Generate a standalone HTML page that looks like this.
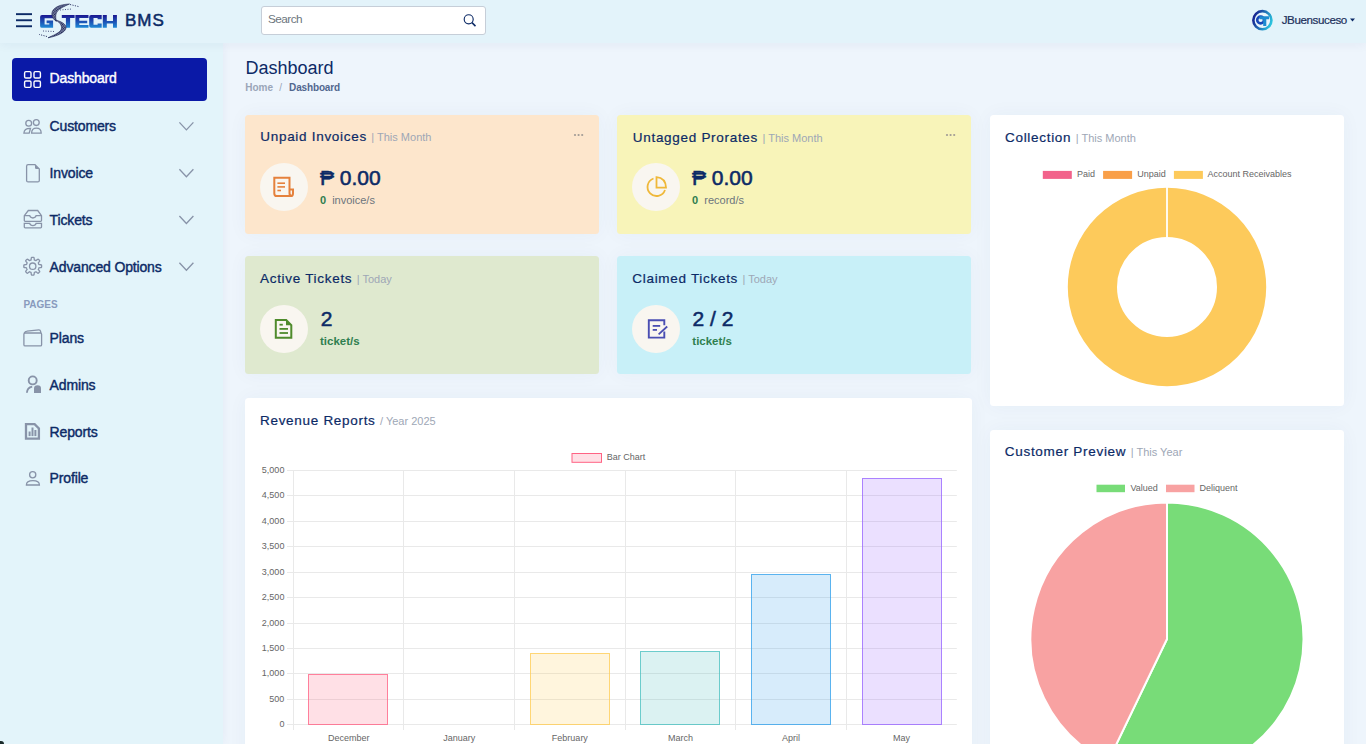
<!DOCTYPE html>
<html><head><meta charset="utf-8">
<style>
*{box-sizing:border-box;margin:0;padding:0}
html,body{width:1366px;height:744px;overflow:hidden}
body{font-family:"Liberation Sans",sans-serif;background:#eef5fc;position:relative;color:#012970}
.a{position:absolute}
.t{position:absolute;line-height:1;white-space:nowrap}
.card{position:absolute;border-radius:3.5px;box-shadow:0 0 20px rgba(20,60,120,0.045)}
.circ{position:absolute;width:48px;height:48px;border-radius:50%;background:#f9f6f0}
svg{position:absolute;overflow:visible}
</style></head><body>

<div class="card" style="left:245px;top:115px;width:354px;height:119px;background:#fde6cc"></div>
<div class="card" style="left:617px;top:115px;width:354px;height:119px;background:#f8f4b9"></div>
<div class="card" style="left:245px;top:256px;width:354px;height:118px;background:#dfe9cf"></div>
<div class="card" style="left:617px;top:256px;width:354px;height:118px;background:#c8f0f8"></div>
<div class="card" style="left:990px;top:115px;width:354px;height:291px;background:#ffffff"></div>
<div class="card" style="left:245px;top:398px;width:727px;height:380px;background:#ffffff"></div>
<div class="card" style="left:990px;top:430px;width:354px;height:360px;background:#ffffff"></div>
<div class="a" style="left:0;top:0;width:1366px;height:43px;background:#e3f3fa;box-shadow:0 2px 10px rgba(1,41,112,0.05);z-index:2"></div>
<div class="a" style="left:0;top:43px;width:223px;height:701px;background:#e3f4fa;box-shadow:0 0 10px rgba(1,41,112,0.05);z-index:1"></div>
<svg style="left:0;top:0;z-index:3" width="1366" height="43"><rect x="16" y="13.2" width="16" height="1.9" fill="#0c2a66"/><rect x="16" y="19.3" width="16" height="1.9" fill="#0c2a66"/><rect x="16" y="25.3" width="16" height="1.9" fill="#0c2a66"/><defs><pattern id="mesh" width="1.5" height="1.5" patternUnits="userSpaceOnUse" patternTransform="rotate(30)"><rect width="1.5" height="1.5" fill="#8890b0"/><rect width="1" height="1" fill="#1a2050"/></pattern><linearGradient id="lg" x1="0" y1="0" x2="0" y2="1"><stop offset="0" stop-color="#1a1590"/><stop offset="1" stop-color="#1f8ad6"/></linearGradient></defs><g fill="url(#lg)"><path d="M42 15 H53.1 V18.3 H44.6 V24.6 H49.3 V23.2 H46.6 V20.5 H53.1 V27.8 H42 Q40.1 27.8 40.1 25.9 V16.9 Q40.1 15 42 15Z"/><path d="M61.8 15 H74.6 V17.9 H70.1 V27.8 H65.9 V17.9 H61.8Z"/><path d="M75.4 15 H88.5 V17.9 H79.3 V20.7 H87.2 V23.2 H79.3 V25.1 H88.5 V27.8 H75.4Z"/><path d="M91.2 15 H101.7 V19.3 H97.6 V18 H93.5 V24.8 H97.6 V23.5 H101.7 V27.8 H91.2 Q89.2 27.8 89.2 25.8 V17 Q89.2 15 91.2 15Z"/><path d="M102.8 15 H106.8 V20.9 H113 V15 H116.9 V27.8 H113 V23.6 H106.8 V27.8 H102.8Z"/></g><path d="M56.4 21.4 C51 18 50.5 12 54.5 8.5 C58 5.5 63 4.3 69.5 4 C65 6 60 8 57.5 11 C55.5 13.5 55.2 17 56.4 21.4Z" fill="url(#mesh)" stroke="#1d2452" stroke-width="0.6"/><path d="M55 19.8 C61 21.5 66.5 24 66 28 C65.5 32 58 36 48 37.8 C54 35 59 33 61 30 C62.5 27 61 22.5 55 19.8Z" fill="url(#mesh)" stroke="#1d2452" stroke-width="0.6"/><path d="M70 4.5 L79.5 6.8" stroke="#3a4270" stroke-width="1" stroke-dasharray="1.2 1.3"/><path d="M60 10 L72 9" stroke="#3a4270" stroke-width="0.9" stroke-dasharray="1 1.5"/><path d="M47 36.5 L39 34.4" stroke="#3a4270" stroke-width="1" stroke-dasharray="1.2 1.3"/><path d="M43 31 L54 31.5" stroke="#3a4270" stroke-width="0.9" stroke-dasharray="1 1.5"/></svg>
<div class="t" style="left:125px;top:12px;font-size:17px;font-weight:normal;-webkit-text-stroke:0.5px #0c2a66;color:#0c2a66;letter-spacing:1px;z-index:3">BMS</div>
<div class="a" style="left:261px;top:6px;width:225px;height:29px;background:#fff;border:1px solid #c6ced8;border-radius:3px;z-index:3"></div>
<div class="t" style="left:268.00px;top:14.32px;font-size:11.8px;font-weight:normal;color:#6c757d;letter-spacing:-0.55px;z-index:3">Search</div>
<svg style="left:0;top:0;z-index:3" width="1" height="1"><circle cx="468.7" cy="19.3" r="4.5" fill="none" stroke="#0c2a66" stroke-width="1.15"/><line x1="472" y1="22.6" x2="475.5" y2="26.1" stroke="#0c2a66" stroke-width="1.5"/></svg>
<svg style="left:0;top:0;z-index:3" width="1" height="1"><defs><linearGradient id="pg" x1="0" y1="0.3" x2="1" y2="0.7"><stop offset="0" stop-color="#16208f"/><stop offset="1" stop-color="#2cc6df"/></linearGradient></defs><circle cx="1262.4" cy="20.2" r="9.05" fill="#e9f5fb" stroke="url(#pg)" stroke-width="2.6"/><circle cx="1260.6" cy="20" r="3.4" fill="none" stroke="#1848b8" stroke-width="2.6"/><path d="M1259.5 16.2 H1269 V19.2 H1266.3 V26 H1263.2 V19.2 H1259.5Z" fill="#1d8bd0"/><path d="M1350 18.4 H1355 L1352.5 21.4Z" fill="#0c2a66"/></svg>
<div class="t" style="left:1281.70px;top:14.09px;font-size:11.6px;font-weight:normal;color:#1b2f5a;letter-spacing:-0.4px;-webkit-text-stroke:0.2px #1b2f5a;z-index:3">JBuensuceso</div>
<div class="a" style="left:12px;top:58px;width:195px;height:43px;background:#0a19a7;border-radius:4px;z-index:3"></div>
<div class="t" style="left:49.60px;top:71.26px;font-size:14px;font-weight:normal;color:#ffffff;letter-spacing:-0.15px;-webkit-text-stroke:0.4px #ffffff;z-index:3">Dashboard</div>
<div class="t" style="left:49.60px;top:119.06px;font-size:14px;font-weight:normal;color:#0c2a66;letter-spacing:-0.15px;-webkit-text-stroke:0.4px #0c2a66;z-index:3">Customers</div>
<div class="t" style="left:49.60px;top:165.96px;font-size:14px;font-weight:normal;color:#0c2a66;letter-spacing:-0.15px;-webkit-text-stroke:0.4px #0c2a66;z-index:3">Invoice</div>
<div class="t" style="left:49.60px;top:212.96px;font-size:14px;font-weight:normal;color:#0c2a66;letter-spacing:-0.15px;-webkit-text-stroke:0.4px #0c2a66;z-index:3">Tickets</div>
<div class="t" style="left:49.60px;top:259.96px;font-size:14px;font-weight:normal;color:#0c2a66;letter-spacing:-0.15px;-webkit-text-stroke:0.4px #0c2a66;z-index:3">Advanced Options</div>
<div class="t" style="left:49.60px;top:331.06px;font-size:14px;font-weight:normal;color:#0c2a66;letter-spacing:-0.15px;-webkit-text-stroke:0.4px #0c2a66;z-index:3">Plans</div>
<div class="t" style="left:49.60px;top:378.36px;font-size:14px;font-weight:normal;color:#0c2a66;letter-spacing:-0.15px;-webkit-text-stroke:0.4px #0c2a66;z-index:3">Admins</div>
<div class="t" style="left:49.60px;top:425.06px;font-size:14px;font-weight:normal;color:#0c2a66;letter-spacing:-0.15px;-webkit-text-stroke:0.4px #0c2a66;z-index:3">Reports</div>
<div class="t" style="left:49.60px;top:471.46px;font-size:14px;font-weight:normal;color:#0c2a66;letter-spacing:-0.15px;-webkit-text-stroke:0.4px #0c2a66;z-index:3">Profile</div>
<div class="t" style="left:23.40px;top:299.84px;font-size:10px;font-weight:bold;color:#899bbd;z-index:3">PAGES</div>
<svg style="left:0;top:0;z-index:3" width="1" height="1"><rect x="24.6" y="71.6" width="6.4" height="6.4" rx="1.3" fill="none" stroke="#fff" stroke-width="1.4"/><rect x="34" y="71.6" width="6.4" height="6.4" rx="1.3" fill="none" stroke="#fff" stroke-width="1.4"/><rect x="24.6" y="81" width="6.4" height="6.4" rx="1.3" fill="none" stroke="#fff" stroke-width="1.4"/><rect x="34" y="81" width="6.4" height="6.4" rx="1.3" fill="none" stroke="#fff" stroke-width="1.4"/><g fill="none" stroke="#8893a8" stroke-width="1.3"><circle cx="28.7" cy="123.3" r="2.9"/><circle cx="36.3" cy="122.6" r="2.9"/><path d="M31.6 133.2 H41.2 Q41.2 128.2 36.4 128.2 Q31.6 128.2 31.6 133.2Z"/><path d="M23.9 133.2 H29.2 L30.5 128.4 Q24.2 128.2 23.9 133.2Z"/></g><g fill="none" stroke="#8893a8" stroke-width="1.3"><path d="M26.6 166.2 Q26.6 164.7 28.1 164.7 H35 L39.3 169 V180.4 Q39.3 181.9 37.8 181.9 H28.1 Q26.6 181.9 26.6 180.4Z"/></g><path d="M35 164.7 V167.7 Q35 169 36.3 169 H39.3Z" fill="#8893a8"/><g fill="none" stroke="#8893a8" stroke-width="1.3"><path d="M28.3 210.5 H37.7 L41.5 215.7 V220.6 Q41.5 221.4 40.7 221.4 H25.1 Q24.3 221.4 24.3 220.6 V215.7Z"/><path d="M24.3 215.7 H29.7 Q30.3 218 32.9 218 Q35.5 218 36.1 215.7 H41.5"/><path d="M24.3 223.3 H29.7 Q30.3 225.6 32.9 225.6 Q35.5 225.6 36.1 223.3 H41.5 V227.1 Q41.5 227.9 40.7 227.9 H25.1 Q24.3 227.9 24.3 227.1Z"/></g><g fill="none" stroke="#8893a8" stroke-width="1.3"><path d="M32.70 257.30 L32.93 257.30 L33.17 257.31 L33.40 257.33 L33.63 257.35 L33.86 257.42 L34.03 257.77 L34.15 258.36 L34.22 259.03 L34.28 259.62 L34.37 259.97 L34.52 260.06 L34.68 260.11 L34.84 260.17 L34.99 260.23 L35.15 260.29 L35.30 260.35 L35.46 260.42 L35.61 260.50 L35.75 260.58 L35.92 260.61 L36.24 260.43 L36.69 260.06 L37.22 259.63 L37.71 259.30 L38.09 259.18 L38.30 259.28 L38.48 259.43 L38.66 259.59 L38.83 259.74 L38.99 259.91 L39.16 260.07 L39.31 260.24 L39.47 260.42 L39.62 260.60 L39.72 260.81 L39.60 261.19 L39.27 261.68 L38.84 262.21 L38.47 262.66 L38.29 262.98 L38.32 263.15 L38.40 263.29 L38.48 263.44 L38.55 263.60 L38.61 263.75 L38.67 263.91 L38.73 264.06 L38.79 264.22 L38.84 264.38 L38.93 264.53 L39.28 264.62 L39.87 264.68 L40.54 264.75 L41.13 264.87 L41.48 265.04 L41.55 265.27 L41.57 265.50 L41.59 265.73 L41.60 265.97 L41.60 266.20 L41.60 266.43 L41.59 266.67 L41.57 266.90 L41.55 267.13 L41.48 267.36 L41.13 267.53 L40.54 267.65 L39.87 267.72 L39.28 267.78 L38.93 267.87 L38.84 268.02 L38.79 268.18 L38.73 268.34 L38.67 268.49 L38.61 268.65 L38.55 268.80 L38.48 268.96 L38.40 269.11 L38.32 269.25 L38.29 269.42 L38.47 269.74 L38.84 270.19 L39.27 270.72 L39.60 271.21 L39.72 271.59 L39.62 271.80 L39.47 271.98 L39.31 272.16 L39.16 272.33 L38.99 272.49 L38.83 272.66 L38.66 272.81 L38.48 272.97 L38.30 273.12 L38.09 273.22 L37.71 273.10 L37.22 272.77 L36.69 272.34 L36.24 271.97 L35.92 271.79 L35.75 271.82 L35.61 271.90 L35.46 271.98 L35.30 272.05 L35.15 272.11 L34.99 272.17 L34.84 272.23 L34.68 272.29 L34.52 272.34 L34.37 272.43 L34.28 272.78 L34.22 273.37 L34.15 274.04 L34.03 274.63 L33.86 274.98 L33.63 275.05 L33.40 275.07 L33.17 275.09 L32.93 275.10 L32.70 275.10 L32.47 275.10 L32.23 275.09 L32.00 275.07 L31.77 275.05 L31.54 274.98 L31.37 274.63 L31.25 274.04 L31.18 273.37 L31.12 272.78 L31.03 272.43 L30.88 272.34 L30.72 272.29 L30.56 272.23 L30.41 272.17 L30.25 272.11 L30.10 272.05 L29.94 271.98 L29.79 271.90 L29.65 271.82 L29.48 271.79 L29.16 271.97 L28.71 272.34 L28.18 272.77 L27.69 273.10 L27.31 273.22 L27.10 273.12 L26.92 272.97 L26.74 272.81 L26.57 272.66 L26.41 272.49 L26.24 272.33 L26.09 272.16 L25.93 271.98 L25.78 271.80 L25.68 271.59 L25.80 271.21 L26.13 270.72 L26.56 270.19 L26.93 269.74 L27.11 269.42 L27.08 269.25 L27.00 269.11 L26.92 268.96 L26.85 268.80 L26.79 268.65 L26.73 268.49 L26.67 268.34 L26.61 268.18 L26.56 268.02 L26.47 267.87 L26.12 267.78 L25.53 267.72 L24.86 267.65 L24.27 267.53 L23.92 267.36 L23.85 267.13 L23.83 266.90 L23.81 266.67 L23.80 266.43 L23.80 266.20 L23.80 265.97 L23.81 265.73 L23.83 265.50 L23.85 265.27 L23.92 265.04 L24.27 264.87 L24.86 264.75 L25.53 264.68 L26.12 264.62 L26.47 264.53 L26.56 264.38 L26.61 264.22 L26.67 264.06 L26.73 263.91 L26.79 263.75 L26.85 263.60 L26.92 263.44 L27.00 263.29 L27.08 263.15 L27.11 262.98 L26.93 262.66 L26.56 262.21 L26.13 261.68 L25.80 261.19 L25.68 260.81 L25.78 260.60 L25.93 260.42 L26.09 260.24 L26.24 260.07 L26.41 259.91 L26.57 259.74 L26.74 259.59 L26.92 259.43 L27.10 259.28 L27.31 259.18 L27.69 259.30 L28.18 259.63 L28.71 260.06 L29.16 260.43 L29.48 260.61 L29.65 260.58 L29.79 260.50 L29.94 260.42 L30.10 260.35 L30.25 260.29 L30.41 260.23 L30.56 260.17 L30.72 260.11 L30.88 260.06 L31.03 259.97 L31.12 259.62 L31.18 259.03 L31.25 258.36 L31.37 257.77 L31.54 257.42 L31.77 257.35 L32.00 257.33 L32.23 257.31 L32.47 257.30Z"/><circle cx="32.7" cy="266.2" r="3.2"/></g><g fill="none" stroke="#8893a8" stroke-width="1.3"><path d="M23.9 334.2 Q23.9 333 25.1 333 H40.4 Q41.6 333 41.6 334.2 V344.7 Q41.6 345.9 40.4 345.9 H25.1 Q23.9 345.9 23.9 344.7Z"/><path d="M24.3 333.3 Q25 331.2 27 331.1 L38.8 329.8 Q40.3 329.7 40.6 331.3 L40.8 333"/></g><g fill="none" stroke="#8893a8" stroke-width="1.9"><circle cx="32.7" cy="380.4" r="4"/><path d="M26.9 392.8 Q27.2 387.6 32.2 386.6"/></g><path d="M34 393 V388.3 Q34 385.2 37.5 385.2 Q41 385.2 41 388.3 V393Z" fill="#8893a8"/><g fill="none" stroke="#8893a8" stroke-width="2.3"><path d="M26 424.2 H34.6 L38.9 428.5 V438.7 H26Z"/></g><g fill="#8893a8"><rect x="28.6" y="431.5" width="2" height="4.6"/><rect x="31.5" y="427.5" width="2" height="8.6"/><rect x="34.4" y="430" width="2" height="6.1"/></g><g fill="none" stroke="#8893a8" stroke-width="1.3"><circle cx="32.7" cy="474.8" r="3.1"/><path d="M26.4 485 H39.4 Q39.4 480.6 32.9 480.6 Q26.4 480.6 26.4 485Z"/></g><path d="M179.4 122.4 L186.4 129.9 L193.4 122.4" fill="none" stroke="#8893a8" stroke-width="1.3"/><path d="M179.4 169.3 L186.4 176.8 L193.4 169.3" fill="none" stroke="#8893a8" stroke-width="1.3"/><path d="M179.4 216.0 L186.4 223.5 L193.4 216.0" fill="none" stroke="#8893a8" stroke-width="1.3"/><path d="M179.4 262.7 L186.4 270.2 L193.4 262.7" fill="none" stroke="#8893a8" stroke-width="1.3"/></svg>
<div class="t" style="left:245.50px;top:58.67px;font-size:18px;font-weight:normal;color:#0c2a66;letter-spacing:0px">Dashboard</div>
<div class="t" style="left:245.20px;top:83.14px;font-size:10px;font-weight:bold;color:#9aa5b8;">Home</div>
<div class="t" style="left:279.30px;top:83.14px;font-size:10px;font-weight:normal;color:#9aa5b8;">/</div>
<div class="t" style="left:289.10px;top:83.14px;font-size:10px;font-weight:bold;color:#51678f;letter-spacing:-0.15px">Dashboard</div>
<div class="t" style="left:260.30px;top:130.28px;font-size:13.5px;font-weight:normal;color:#0c2a66;letter-spacing:0.7px;-webkit-text-stroke:0.2px #0c2a66">Unpaid Invoices <span style="font-size:11px;color:#9ea7b6;letter-spacing:0;-webkit-text-stroke:0">| This Month</span></div>
<div class="t" style="left:632.80px;top:130.78px;font-size:13.5px;font-weight:normal;color:#0c2a66;letter-spacing:0.7px;-webkit-text-stroke:0.2px #0c2a66">Untagged Prorates <span style="font-size:11px;color:#9ea7b6;letter-spacing:0;-webkit-text-stroke:0">| This Month</span></div>
<div class="t" style="left:260.00px;top:271.58px;font-size:13.5px;font-weight:normal;color:#0c2a66;letter-spacing:0.7px;-webkit-text-stroke:0.2px #0c2a66">Active Tickets <span style="font-size:11px;color:#9ea7b6;letter-spacing:0;-webkit-text-stroke:0">| Today</span></div>
<div class="t" style="left:632.30px;top:271.58px;font-size:13.5px;font-weight:normal;color:#0c2a66;letter-spacing:0.7px;-webkit-text-stroke:0.2px #0c2a66">Claimed Tickets <span style="font-size:11px;color:#9ea7b6;letter-spacing:0;-webkit-text-stroke:0">| Today</span></div>
<div class="t" style="left:1005.00px;top:130.78px;font-size:13.5px;font-weight:normal;color:#0c2a66;letter-spacing:0.7px;-webkit-text-stroke:0.2px #0c2a66">Collection <span style="font-size:11px;color:#9ea7b6;letter-spacing:0;-webkit-text-stroke:0">| This Month</span></div>
<div class="t" style="left:260.00px;top:413.58px;font-size:13.5px;font-weight:normal;color:#0c2a66;letter-spacing:0.7px;-webkit-text-stroke:0.2px #0c2a66">Revenue Reports <span style="font-size:11px;color:#9ea7b6;letter-spacing:0;-webkit-text-stroke:0">/ Year 2025</span></div>
<div class="t" style="left:1004.80px;top:444.78px;font-size:13.5px;font-weight:normal;color:#0c2a66;letter-spacing:0.7px;-webkit-text-stroke:0.2px #0c2a66">Customer Preview <span style="font-size:11px;color:#9ea7b6;letter-spacing:0;-webkit-text-stroke:0">| This Year</span></div>
<div class="circ" style="left:260px;top:163px"></div>
<div class="circ" style="left:632px;top:163px"></div>
<div class="circ" style="left:260px;top:305px"></div>
<div class="circ" style="left:632px;top:305px"></div>
<svg style="left:0;top:0" width="1" height="1"><g fill="#a19b95"><circle cx="575" cy="135" r="1.1"/><circle cx="578.6" cy="135" r="1.1"/><circle cx="582.2" cy="135" r="1.1"/></g></svg>
<svg style="left:0;top:0" width="1" height="1"><g fill="#a19b95"><circle cx="947" cy="135" r="1.1"/><circle cx="950.6" cy="135" r="1.1"/><circle cx="954.2" cy="135" r="1.1"/></g></svg>
<div class="t" style="left:319.90px;top:167.13px;font-size:21px;font-weight:normal;color:#0c2a66;letter-spacing:0px;-webkit-text-stroke:0.55px #0c2a66">&#8369; 0.00</div>
<div class="t" style="left:692.00px;top:167.13px;font-size:21px;font-weight:normal;color:#0c2a66;letter-spacing:0px;-webkit-text-stroke:0.55px #0c2a66">&#8369; 0.00</div>
<div class="t" style="left:320.80px;top:308.13px;font-size:21px;font-weight:normal;color:#0c2a66;letter-spacing:0px;-webkit-text-stroke:0.55px #0c2a66">2</div>
<div class="t" style="left:692.50px;top:308.13px;font-size:21px;font-weight:normal;color:#0c2a66;letter-spacing:0px;-webkit-text-stroke:0.55px #0c2a66">2 / 2</div>
<div class="t" style="left:319.90px;top:194.89px;font-size:11px;font-weight:normal;color:#6c757d;"><b style="color:#2e7d4f">0</b>&nbsp;&nbsp;invoice/s</div>
<div class="t" style="left:692.00px;top:194.89px;font-size:11px;font-weight:normal;color:#6c757d;"><b style="color:#2e7d4f">0</b>&nbsp;&nbsp;record/s</div>
<div class="t" style="left:320.00px;top:335.97px;font-size:11.5px;font-weight:bold;color:#2f7f4f;">ticket/s</div>
<div class="t" style="left:692.30px;top:335.97px;font-size:11.5px;font-weight:bold;color:#2f7f4f;">ticket/s</div>
<svg style="left:0;top:0" width="1" height="1"><g fill="none" stroke="#e5813c" stroke-width="2"><path d="M274.3 177.7 H289.5 V193.2 Q289.5 196 292 196 H276.9 Q274.3 196 274.3 193.4Z"/><path d="M289.5 189.6 H293 V193.4 Q293 196 290.8 196"/></g><g stroke="#e5813c" stroke-width="1.6"><line x1="277.4" y1="183.2" x2="285" y2="183.2"/><line x1="277.4" y1="186.9" x2="285" y2="186.9"/><line x1="277.4" y1="190.5" x2="281" y2="190.5"/></g><g fill="none" stroke="#efb83a" stroke-width="1.8"><path d="M653.5 178.5 A9 9 0 1 0 665 190"/><path d="M656.5 177.2 V187.6 H666 Q665.6 178 656.5 177.2Z"/></g><g fill="none" stroke="#4f8b2c" stroke-width="2"><path d="M275.8 320 H286.2 L291.3 325.1 V337.8 H275.8Z"/></g><path d="M286 320 L291.3 325.3 H286Z" fill="#4f8b2c"/><g stroke="#4f8b2c" stroke-width="1.8"><line x1="279.5" y1="324.7" x2="282.8" y2="324.7"/><line x1="279.5" y1="328.9" x2="288" y2="328.9"/><line x1="279.5" y1="333" x2="288" y2="333"/></g><g fill="none" stroke="#4a4eb2" stroke-width="1.9"><path d="M664.3 325.2 V320.2 H648.8 V337.6 H664.3 V331.5"/></g><g stroke="#4a4eb2" stroke-width="1.8"><line x1="652.7" y1="325.9" x2="660.2" y2="325.9"/><line x1="652.7" y1="329.9" x2="657" y2="329.9"/><line x1="658.6" y1="334.3" x2="667.2" y2="326.5"/></g></svg>
<svg style="left:0;top:0" width="1" height="1"><circle cx="1167" cy="287" r="74.6" fill="none" stroke="#fdca5b" stroke-width="49.2"/><line x1="1167" y1="186" x2="1167" y2="238" stroke="#fff" stroke-width="1.8"/><rect x="1042.8" y="170.9" width="29" height="8" fill="#f2628b"/><text x="1077" y="177.4" font-family="Liberation Sans" font-size="9" fill="#666">Paid</text><rect x="1103.1" y="170.9" width="29" height="8" fill="#f99f48"/><text x="1137.3" y="177.4" font-family="Liberation Sans" font-size="9" fill="#666">Unpaid</text><rect x="1173.9" y="170.9" width="29" height="8" fill="#fdca5b"/><text x="1207.5" y="177.4" font-family="Liberation Sans" font-size="9" fill="#666">Account Receivables</text><path d="M1167 639 L1167 502.5 A136.5 136.5 0 1 1 1107.81 762.00Z" fill="#78dc78" stroke="#fff" stroke-width="2"/><path d="M1167 639 L1107.81 762.00 A136.5 136.5 0 0 1 1167 502.5Z" fill="#f8a2a2" stroke="#fff" stroke-width="2"/><rect x="1096.5" y="484.7" width="28.5" height="7.5" fill="#78dc78"/><text x="1130.4" y="491.3" font-family="Liberation Sans" font-size="9" fill="#666">Valued</text><rect x="1166" y="484.7" width="28.5" height="7.5" fill="#f8a2a2"/><text x="1199.6" y="491.3" font-family="Liberation Sans" font-size="9" fill="#666">Deliquent</text><line x1="287" y1="724.50" x2="956.8" y2="724.50" stroke="#e9e9e9" stroke-width="1"/><text x="284.4" y="727.20" text-anchor="end" font-family="Liberation Sans" font-size="9" fill="#666">0</text><line x1="287" y1="699.50" x2="956.8" y2="699.50" stroke="#e9e9e9" stroke-width="1"/><text x="284.4" y="702.20" text-anchor="end" font-family="Liberation Sans" font-size="9" fill="#666">500</text><line x1="287" y1="673.50" x2="956.8" y2="673.50" stroke="#e9e9e9" stroke-width="1"/><text x="284.4" y="676.20" text-anchor="end" font-family="Liberation Sans" font-size="9" fill="#666">1,000</text><line x1="287" y1="648.50" x2="956.8" y2="648.50" stroke="#e9e9e9" stroke-width="1"/><text x="284.4" y="651.20" text-anchor="end" font-family="Liberation Sans" font-size="9" fill="#666">1,500</text><line x1="287" y1="623.50" x2="956.8" y2="623.50" stroke="#e9e9e9" stroke-width="1"/><text x="284.4" y="626.20" text-anchor="end" font-family="Liberation Sans" font-size="9" fill="#666">2,000</text><line x1="287" y1="597.50" x2="956.8" y2="597.50" stroke="#e9e9e9" stroke-width="1"/><text x="284.4" y="600.20" text-anchor="end" font-family="Liberation Sans" font-size="9" fill="#666">2,500</text><line x1="287" y1="572.50" x2="956.8" y2="572.50" stroke="#e9e9e9" stroke-width="1"/><text x="284.4" y="575.20" text-anchor="end" font-family="Liberation Sans" font-size="9" fill="#666">3,000</text><line x1="287" y1="546.50" x2="956.8" y2="546.50" stroke="#e9e9e9" stroke-width="1"/><text x="284.4" y="549.20" text-anchor="end" font-family="Liberation Sans" font-size="9" fill="#666">3,500</text><line x1="287" y1="521.50" x2="956.8" y2="521.50" stroke="#e9e9e9" stroke-width="1"/><text x="284.4" y="524.20" text-anchor="end" font-family="Liberation Sans" font-size="9" fill="#666">4,000</text><line x1="287" y1="495.50" x2="956.8" y2="495.50" stroke="#e9e9e9" stroke-width="1"/><text x="284.4" y="498.20" text-anchor="end" font-family="Liberation Sans" font-size="9" fill="#666">4,500</text><line x1="287" y1="470.50" x2="956.8" y2="470.50" stroke="#e9e9e9" stroke-width="1"/><text x="284.4" y="473.20" text-anchor="end" font-family="Liberation Sans" font-size="9" fill="#666">5,000</text><line x1="293.50" y1="470" x2="293.50" y2="730" stroke="#e9e9e9" stroke-width="1"/><line x1="403.50" y1="470" x2="403.50" y2="730" stroke="#e9e9e9" stroke-width="1"/><line x1="514.50" y1="470" x2="514.50" y2="730" stroke="#e9e9e9" stroke-width="1"/><line x1="625.50" y1="470" x2="625.50" y2="730" stroke="#e9e9e9" stroke-width="1"/><line x1="735.50" y1="470" x2="735.50" y2="730" stroke="#e9e9e9" stroke-width="1"/><line x1="846.50" y1="470" x2="846.50" y2="730" stroke="#e9e9e9" stroke-width="1"/><text x="348.77" y="741.3" text-anchor="middle" font-family="Liberation Sans" font-size="9" fill="#666">December</text><text x="459.32" y="741.3" text-anchor="middle" font-family="Liberation Sans" font-size="9" fill="#666">January</text><text x="569.88" y="741.3" text-anchor="middle" font-family="Liberation Sans" font-size="9" fill="#666">February</text><text x="680.42" y="741.3" text-anchor="middle" font-family="Liberation Sans" font-size="9" fill="#666">March</text><text x="790.97" y="741.3" text-anchor="middle" font-family="Liberation Sans" font-size="9" fill="#666">April</text><text x="901.52" y="741.3" text-anchor="middle" font-family="Liberation Sans" font-size="9" fill="#666">May</text><rect x="308.5" y="674.5" width="79" height="50" fill="rgba(255,99,132,0.2)" stroke="rgb(255,99,132)" stroke-opacity="0.8" stroke-width="1"/><rect x="530.5" y="653.5" width="79" height="71" fill="rgba(255,205,86,0.2)" stroke="rgb(255,205,86)" stroke-opacity="0.8" stroke-width="1"/><rect x="640.5" y="651.5" width="79" height="73" fill="rgba(75,192,192,0.2)" stroke="rgb(75,192,192)" stroke-opacity="0.8" stroke-width="1"/><rect x="751.5" y="574.5" width="79" height="150" fill="rgba(54,162,235,0.2)" stroke="rgb(54,162,235)" stroke-opacity="0.8" stroke-width="1"/><rect x="862.5" y="478.5" width="79" height="246" fill="rgba(153,102,255,0.2)" stroke="rgb(153,102,255)" stroke-opacity="0.8" stroke-width="1"/><rect x="572" y="453.5" width="29.5" height="8.8" fill="rgba(255,99,132,0.2)" stroke="rgb(255,99,132)" stroke-width="1"/><text x="606.7" y="460.3" font-family="Liberation Sans" font-size="9" fill="#666">Bar Chart</text></svg>
<div class="a" style="left:0;top:741px;width:4px;height:3px;background:#1a2a2a;border-top-right-radius:3px;z-index:9"></div>
</body></html>
